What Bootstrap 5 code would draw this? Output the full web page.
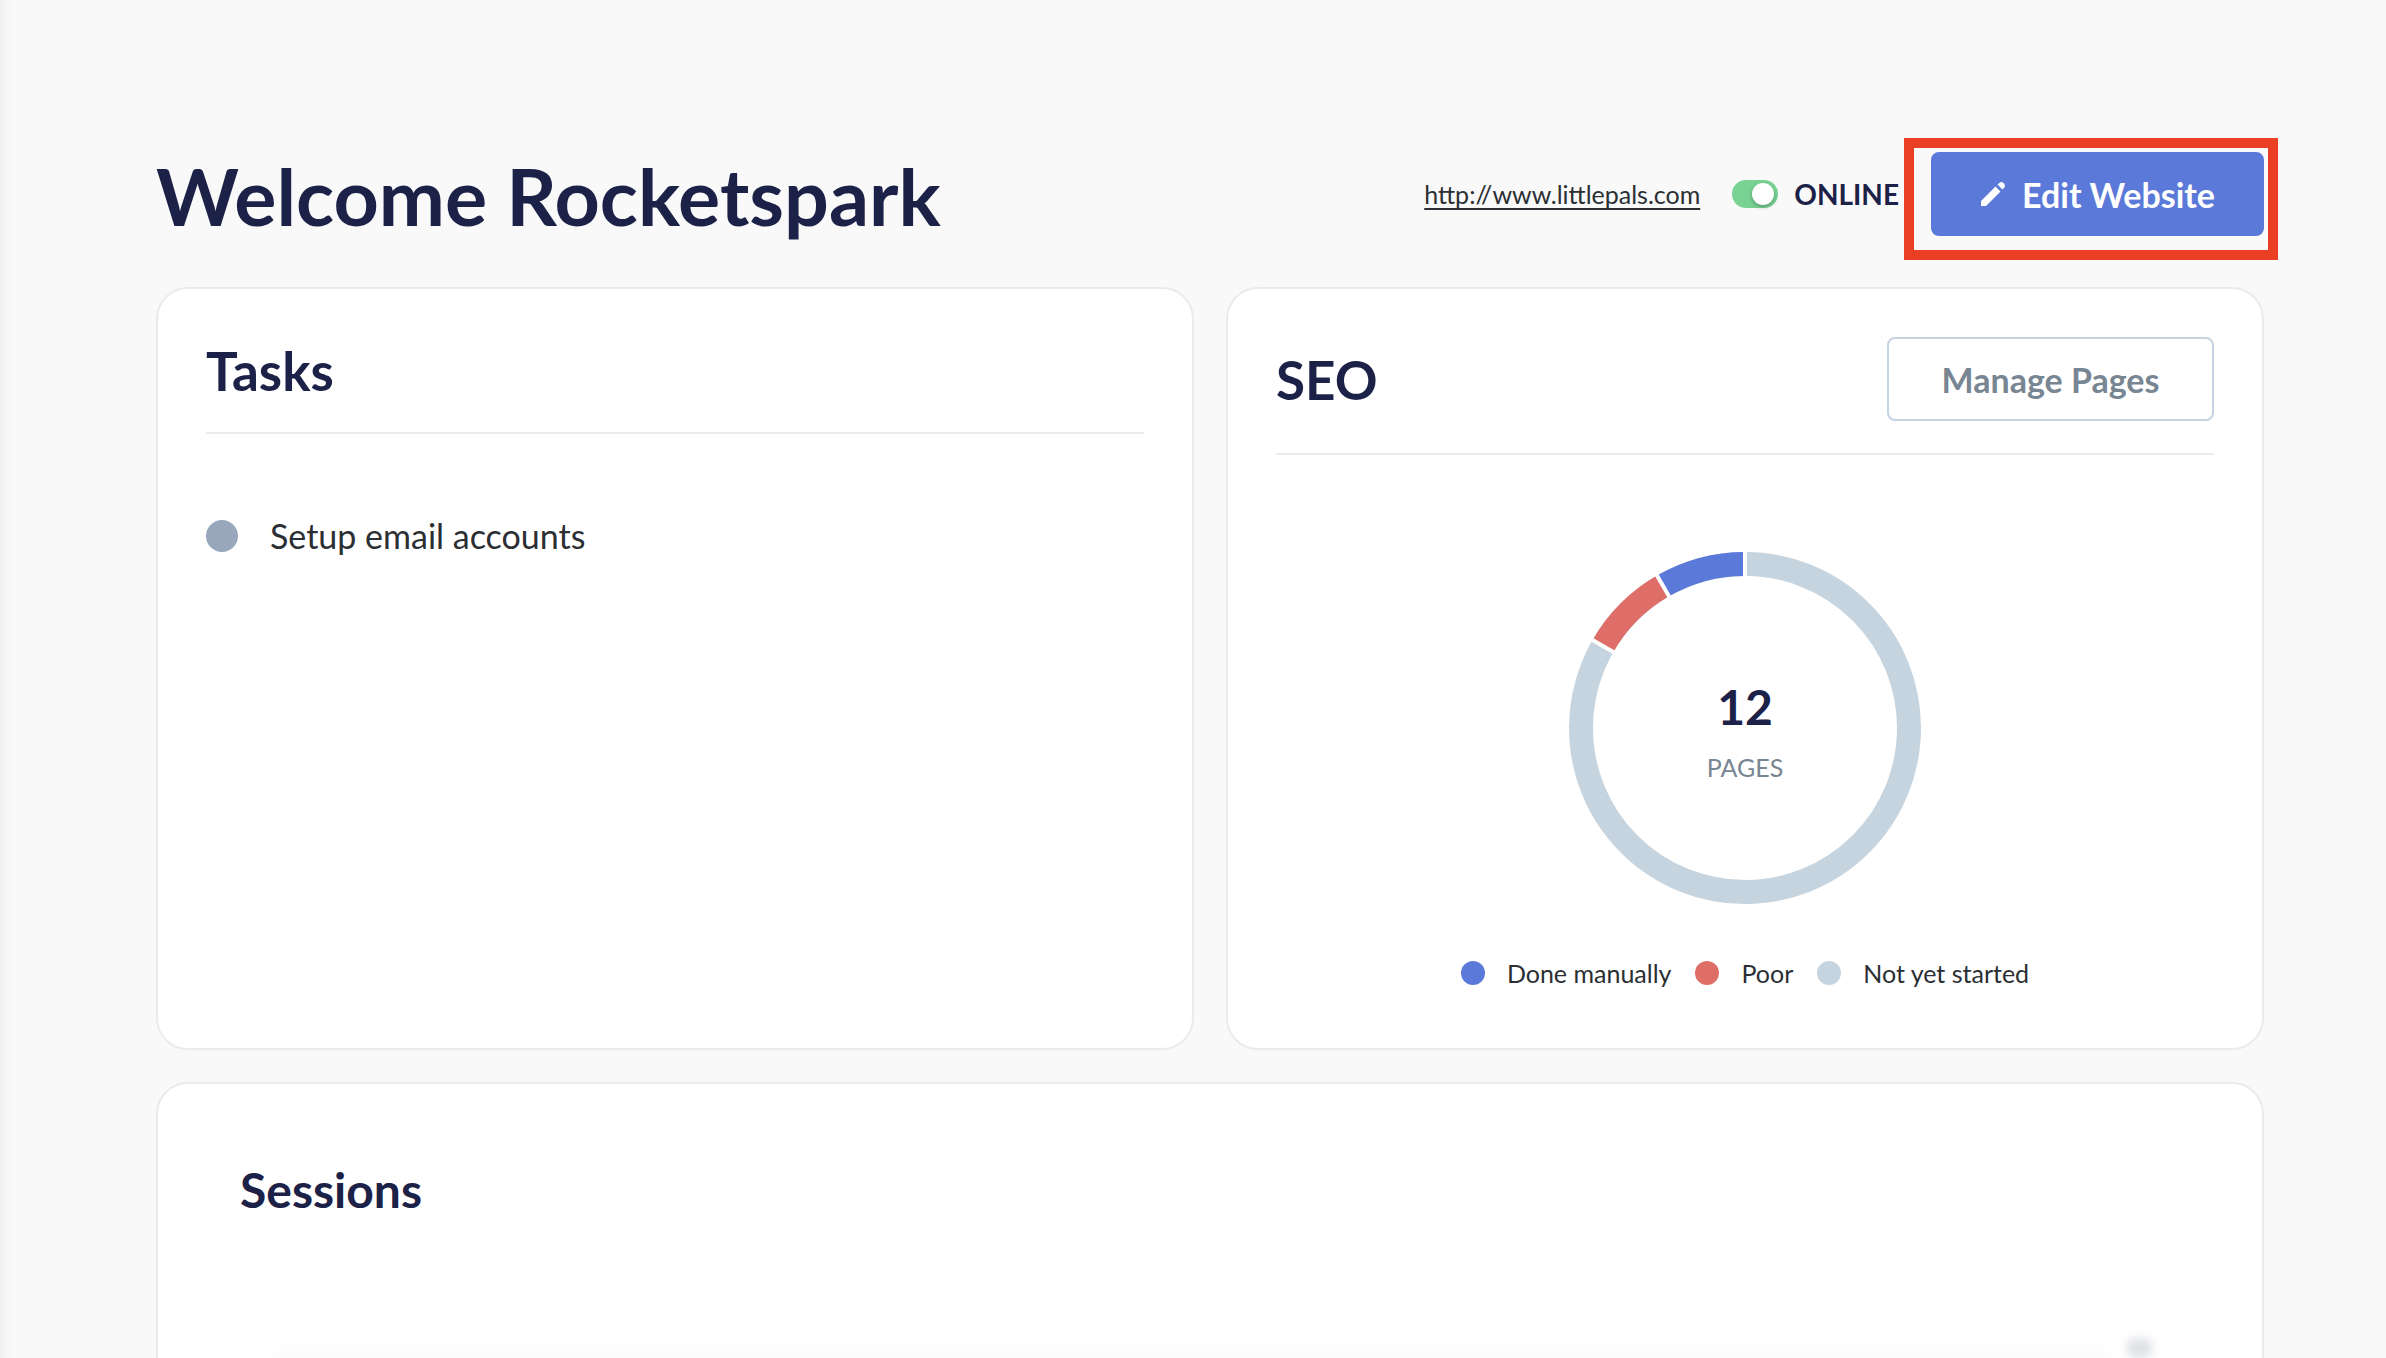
<!DOCTYPE html>
<html lang="en">
<head>
<meta charset="utf-8">
<meta name="viewport" content="width=device-width, initial-scale=1">
<title>Dashboard</title>
<link rel="stylesheet" href="https://cdn.jsdelivr.net/npm/bootstrap@5.3.0/dist/css/bootstrap.min.css">
<style>
body{font-family:Lato,"Open Sans",sans-serif;background:#f9f9f9;color:#2b2f33;font-size:25px;line-height:32px}
.page-shell{padding:152px 122px 0 156px;background:linear-gradient(90deg,#efefef 0,#f6f6f6 6px,#f9f9f9 14px)}
.page-head{margin-bottom:51px;height:84px}
h1,h2,.navy{color:#1c2147}
h1{font-size:79px;line-height:88px;font-weight:700;padding-top:4px}
h2{font-size:53px;line-height:64px;font-weight:700;padding-top:2px}
.site-link{color:#2b2f33;font-size:25px;text-underline-offset:4px}
.site-toggle.form-check-input{width:46px;height:28px;margin:0;border:0;box-shadow:none;background-color:#78d393;background-image:none;border-radius:14px;position:relative}
.site-toggle.form-check-input:checked{background-color:#78d393;background-image:none}
.site-toggle::before{content:"";position:absolute;top:3px;right:4px;width:22px;height:22px;border-radius:50%;background:#fff;box-shadow:0 2px 4px #0004}
.status-label{font-size:28px;font-weight:700}
.big-btn{height:84px;font-size:34px;font-weight:700;border-radius:8px;border-width:2px;padding:0 46px}
.edit-btn,.edit-btn:hover{background:#5b79d8;border-color:#5b79d8;color:#fff;min-width:333px}
.manage-btn{border-color:#c5d3e2;color:#788592;background:#fff;min-width:327px}
.marker-box{inset:-14px -14px -24px -27px;border:10px solid #eb3f25;pointer-events:none}
.panel{border:2px solid #eaebeb;border-radius:32px;background:#fff;padding:48px}
.panel-top{min-height:763px}
.rule-below{border-bottom:2px solid #eaebeb}
.tasks-head{padding-bottom:29px}
.seo-head{padding-bottom:32px}
.task-item{margin-top:84px;gap:32px;font-size:34px;line-height:36px}
.task-dot{width:32px;height:32px;background:#98a7bb}
.donut{width:352px;height:352px;margin:97px auto 0}
.donut-total{font-size:48px;line-height:56px;font-weight:700}
.donut-unit{font-size:25px;line-height:32px;color:#788592}
.donut-text{padding-top:6px}
.legend-list{gap:24px;margin-top:53px}
.legend-list li{gap:22px}
.legend-dot{width:24px;height:24px}
.bg-done{background:#5b79d8}.bg-poor{background:#e06e68}.bg-todo{background:#c6d4df}
.sessions{margin-top:32px;padding:76px 82px 0;height:360px}
.sessions h2{font-size:48px;line-height:56px}
.chart-soft{margin-top:120px;gap:16px;padding:0 28px 0 32px}
.chart-band{height:40px;margin-top:12px;background:#fcfcfc;filter:blur(4px)}
.chart-tick{width:25px;height:20px;border-radius:8px;background:#dfe1e6;filter:blur(5px)}
</style>
</head>
<body>
<main class="page-shell vh-100 overflow-hidden">
  <header class="page-head d-flex justify-content-between align-items-center">
    <h1 class="mb-0">Welcome Rocketspark</h1>
    <div class="d-flex align-items-center gap-4">
      <a class="site-link me-2" href="http://www.littlepals.com">http://www.littlepals.com</a>
      <div class="d-flex align-items-center gap-3 me-2">
        <input class="form-check-input site-toggle" type="checkbox" role="switch" id="online" checked>
        <label class="status-label navy" for="online">ONLINE</label>
      </div>
      <div class="position-relative">
        <button type="button" class="btn big-btn edit-btn d-flex align-items-center justify-content-center gap-3">
          <svg width="26" height="26" viewBox="0 0 26 26" fill="#fff" aria-hidden="true"><path d="M1 20 15.500 5.500 20.500 10.500 6 25H1zM17.500 3.500 19.600 1.700Q21.500.300 23.400 1.900L24.200 2.700Q25.800 4.600 24.400 6.500L22.500 8.500z"/></svg>
          Edit Website
        </button>
        <span class="marker-box position-absolute"></span>
      </div>
    </div>
  </header>

  <div class="row gx-0 gap-0" style="--bs-gutter-x:32px">
    <div class="col-6">
      <section class="panel panel-top h-100">
        <div class="tasks-head rule-below"><h2 class="mb-0">Tasks</h2></div>
        <ul class="list-unstyled mb-0">
          <li class="task-item d-flex align-items-center"><span class="task-dot rounded-circle"></span>Setup email accounts</li>
        </ul>
      </section>
    </div>
    <div class="col-6">
      <section class="panel panel-top h-100">
        <div class="seo-head rule-below d-flex justify-content-between align-items-center">
          <h2 class="mb-0">SEO</h2>
          <button type="button" class="btn big-btn manage-btn">Manage Pages</button>
        </div>
        <div class="donut position-relative">
          <svg class="d-block" width="352" height="352" viewBox="-176 -176 352 352" fill="none" aria-hidden="true">
            <g stroke-width="24">
              <circle r="164" stroke="#c6d4df"/>
              <path d="M-142.030-82A164 164 0 0 1-82-142.030" stroke="#e06e68"/>
              <path d="M-82-142.030A164 164 0 0 1 0-164" stroke="#5b79d8"/>
            </g>
            <path d="M0-148V-178M-74-128.200-89-154.200M-128.200-74-154.200-89" stroke="#fff" stroke-width="4"/>
          </svg>
          <div class="donut-text position-absolute top-0 start-0 w-100 h-100 d-flex flex-column justify-content-center align-items-center">
            <span class="donut-total navy">12</span>
            <span class="donut-unit mt-3">PAGES</span>
          </div>
        </div>
        <ul class="legend-list list-unstyled d-flex justify-content-center mb-0">
          <li class="d-flex align-items-center"><span class="legend-dot bg-done rounded-circle"></span>Done manually</li>
          <li class="d-flex align-items-center"><span class="legend-dot bg-poor rounded-circle"></span>Poor</li>
          <li class="d-flex align-items-center"><span class="legend-dot bg-todo rounded-circle"></span>Not yet started</li>
        </ul>
      </section>
    </div>
  </div>

  <section class="panel sessions">
    <h2 class="mb-0">Sessions</h2>
    <div class="chart-soft d-flex" aria-hidden="true">
      <div class="chart-band flex-grow-1"></div>
      <div class="chart-tick"></div>
    </div>
  </section>
</main>
<script src="https://cdn.jsdelivr.net/npm/bootstrap@5.3.0/dist/js/bootstrap.bundle.min.js"></script>
</body>
</html>
